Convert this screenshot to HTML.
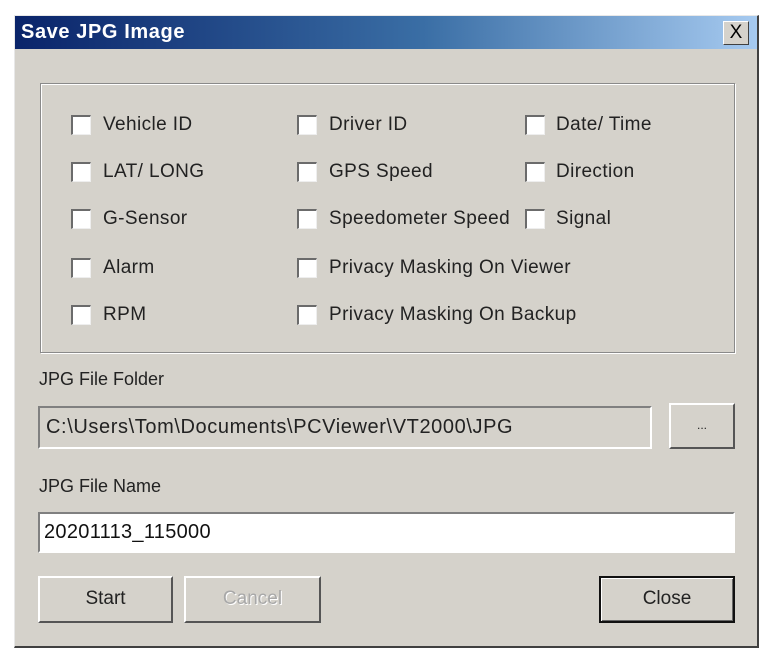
<!DOCTYPE html>
<html><head><style>
body{margin:0;width:766px;height:657px;background:#fff;position:relative;overflow:hidden;font-family:"Liberation Sans",sans-serif;}
.dlg{position:absolute;left:14px;top:15px;width:742px;height:630px;background:#d5d2cb;border-right:2px solid #404040;border-bottom:2px solid #404040;border-top:1px solid #e8e8e8;border-left:1px solid #e8e8e8;}
.title{position:absolute;left:0;top:0;width:742px;height:33px;background:linear-gradient(to right,#0a246a 0%,#3a6ea5 55%,#a6caf0 100%);}
.title span{position:absolute;left:6px;top:5px;color:#fff;font-weight:bold;font-size:20px;letter-spacing:0.6px}
.x{position:absolute;left:708px;top:5px;width:24px;height:22px;background:#d5d2cb;border:1px solid;border-color:#fff #404040 #404040 #fff;font-size:19px;text-align:center;line-height:22px;color:#000}
.a{position:absolute;}
.grp{left:25px;top:67px;width:693px;height:268px;border:1px solid #8a8a8a;box-shadow:1px 1px 0 #fff inset,1px 1px 0 #fff;}
.cb{position:absolute;width:17px;height:17px;background:#fff;border-top:2px solid #6b6b6b;border-left:2px solid #6b6b6b;border-right:1px solid #eee;border-bottom:1px solid #eee;}
.lb{position:absolute;font-size:19px;color:#222;white-space:nowrap;letter-spacing:0.4px}
.lab{font-size:18px;color:#222}
.field{border:2px solid;border-color:#808080 #fff #fff #808080;box-sizing:border-box;font-size:20px;padding-left:6px;}
.btn{background:#d5d2cb;border:2px solid;border-color:#fff #555 #555 #fff;box-sizing:border-box;text-align:center;font-size:19px;color:#222;}
</style></head><body>
<div class="dlg">
<div class="title"><span>Save JPG Image</span><div class="x">X</div></div>
<div class="a grp"></div>
</div>
<div class="cb" style="left:71px;top:115px"></div><div class="lb" style="left:103px;top:114px">Vehicle ID</div>
<div class="cb" style="left:297px;top:115px"></div><div class="lb" style="left:329px;top:114px">Driver ID</div>
<div class="cb" style="left:525px;top:115px"></div><div class="lb" style="left:556px;top:114px">Date/ Time</div>
<div class="cb" style="left:71px;top:162px"></div><div class="lb" style="left:103px;top:161px">LAT/ LONG</div>
<div class="cb" style="left:297px;top:162px"></div><div class="lb" style="left:329px;top:161px">GPS Speed</div>
<div class="cb" style="left:525px;top:162px"></div><div class="lb" style="left:556px;top:161px">Direction</div>
<div class="cb" style="left:71px;top:209px"></div><div class="lb" style="left:103px;top:208px">G-Sensor</div>
<div class="cb" style="left:297px;top:209px"></div><div class="lb" style="left:329px;top:208px">Speedometer Speed</div>
<div class="cb" style="left:525px;top:209px"></div><div class="lb" style="left:556px;top:208px">Signal</div>
<div class="cb" style="left:71px;top:258px"></div><div class="lb" style="left:103px;top:257px">Alarm</div>
<div class="cb" style="left:297px;top:258px"></div><div class="lb" style="left:329px;top:257px">Privacy Masking On Viewer</div>
<div class="cb" style="left:71px;top:305px"></div><div class="lb" style="left:103px;top:304px">RPM</div>
<div class="cb" style="left:297px;top:305px"></div><div class="lb" style="left:329px;top:304px">Privacy Masking On Backup</div>
<div class="a lab" style="left:39px;top:369px">JPG File Folder</div>
<div class="a field" style="left:38px;top:406px;width:614px;height:43px;line-height:39px;background:#d5d2cb;color:#222;letter-spacing:0.6px">C:\Users\Tom\Documents\PCViewer\VT2000\JPG</div>
<div class="a btn" style="left:669px;top:403px;width:66px;height:46px;line-height:40px;font-size:12px">...</div>
<div class="a lab" style="left:39px;top:476px">JPG File Name</div>
<div class="a field" style="left:38px;top:512px;width:697px;height:41px;line-height:37px;background:#fff;color:#111;padding-left:4px;letter-spacing:0.3px">20201113_115000</div>
<div class="a btn" style="left:38px;top:576px;width:135px;height:47px;line-height:42px">Start</div>
<div class="a btn" style="left:184px;top:576px;width:137px;height:47px;line-height:42px;color:#a8a8a8;text-shadow:1px 1px 0 #fff">Cancel</div>
<div class="a btn" style="left:599px;top:576px;width:136px;height:47px;line-height:41px;border:2px solid #111;box-shadow:inset 1px 1px 0 #fff,inset -1px -1px 0 #666">Close</div>
</body></html>
